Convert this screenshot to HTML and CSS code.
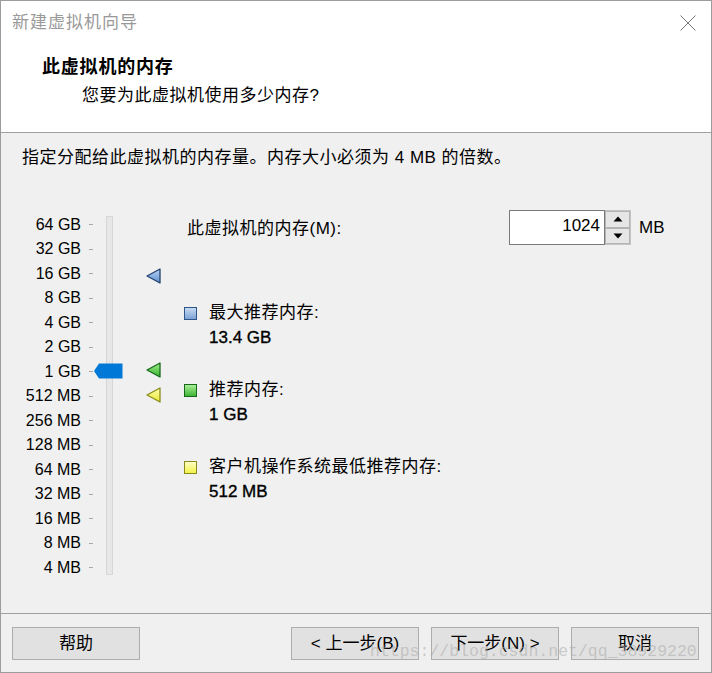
FILE: index.html
```html
<!DOCTYPE html>
<html lang="zh-CN">
<head>
<meta charset="utf-8">
<title>新建虚拟机向导</title>
<link rel="stylesheet" href="styles.css">
</head>
<body>
<div class="window">
  <div class="top">
    <div class="titlebar">
      <span class="title">新建虚拟机向导</span>
      <svg class="close" width="16" height="16" viewBox="0 0 16 16"><path d="M0.5 0.5 L15.5 15.5 M15.5 0.5 L0.5 15.5" stroke="#7a7a7a" stroke-width="1" fill="none"/></svg>
    </div>
    <div class="header">
      <div class="h1">此虚拟机的内存</div>
      <div class="sub">您要为此虚拟机使用多少内存?</div>
    </div>
  </div>

  <div class="content">
    <div class="intro">指定分配给此虚拟机的内存量。内存大小必须为 4 MB 的倍数。</div>
    <div class="main">
      <div class="scale">
        <div class="labels">
          <div>64 GB</div><div>32 GB</div><div>16 GB</div><div>8 GB</div><div>4 GB</div>
          <div>2 GB</div><div>1 GB</div><div>512 MB</div><div>256 MB</div><div>128 MB</div>
          <div>64 MB</div><div>32 MB</div><div>16 MB</div><div>8 MB</div><div>4 MB</div>
        </div>
        <div class="ticks">
          <i></i><i></i><i></i><i></i><i></i><i></i><i></i><i></i><i></i><i></i><i></i><i></i><i></i><i></i><i></i>
        </div>
        <div class="track"></div>
        <svg class="thumb" width="29" height="16" viewBox="0 0 29 16"><polygon points="0,8 5,0.5 28.5,0.5 28.5,15.5 5,15.5" fill="#0078d7"/></svg>
        <svg class="marker m-blue" width="15" height="16" viewBox="0 0 15 16">
          <defs><linearGradient id="gb" x1="0" y1="0" x2="0" y2="1"><stop offset="0" stop-color="#b9d1f0"/><stop offset="1" stop-color="#5d8fd0"/></linearGradient></defs>
          <polygon points="1,8 14,1 14,15" fill="url(#gb)" stroke="#22426e" stroke-width="1.3" stroke-linejoin="round"/>
        </svg>
        <svg class="marker m-green" width="15" height="16" viewBox="0 0 15 16">
          <defs><linearGradient id="gg" x1="0" y1="0" x2="0" y2="1"><stop offset="0" stop-color="#a4ec8e"/><stop offset="1" stop-color="#32b42a"/></linearGradient></defs>
          <polygon points="1,8 14,1 14,15" fill="url(#gg)" stroke="#17691a" stroke-width="1.3" stroke-linejoin="round"/>
        </svg>
        <svg class="marker m-yellow" width="15" height="16" viewBox="0 0 15 16">
          <defs><linearGradient id="gy" x1="0" y1="0" x2="0" y2="1"><stop offset="0" stop-color="#ffffb0"/><stop offset="1" stop-color="#e8e830"/></linearGradient></defs>
          <polygon points="1,8 14,1 14,15" fill="url(#gy)" stroke="#8a8a1c" stroke-width="1.3" stroke-linejoin="round"/>
        </svg>
      </div>

      <div class="panel">
        <div class="memrow">
          <span class="memlabel">此虚拟机的内存(M):</span>
          <div class="spin">
            <div class="spinval">1024</div>
            <div class="spinbtns">
              <div class="sb"><svg width="10" height="6" viewBox="0 0 10 6"><polygon points="5,0.5 9.5,5.5 0.5,5.5" fill="#000"/></svg></div>
              <div class="sb"><svg width="10" height="6" viewBox="0 0 10 6"><polygon points="0.5,0.5 9.5,0.5 5,5.5" fill="#000"/></svg></div>
            </div>
          </div>
          <span class="unit">MB</span>
        </div>

        <div class="legend">
          <div class="item">
            <span class="sq sq-blue"></span>
            <div class="itext"><div class="ilabel">最大推荐内存:</div><div class="ival">13.4 GB</div></div>
          </div>
          <div class="item">
            <span class="sq sq-green"></span>
            <div class="itext"><div class="ilabel">推荐内存:</div><div class="ival">1 GB</div></div>
          </div>
          <div class="item">
            <span class="sq sq-yellow"></span>
            <div class="itext"><div class="ilabel">客户机操作系统最低推荐内存:</div><div class="ival">512 MB</div></div>
          </div>
        </div>
      </div>
    </div>
  </div>

  <div class="footer">
    <button class="btn">帮助</button>
    <div class="navbtns">
      <button class="btn">&lt; 上一步(B)</button>
      <button class="btn">下一步(N) &gt;</button>
      <button class="btn">取消</button>
    </div>
  </div>

  <div class="watermark">https://blog.csdn.net/qq_38929220</div>
</div>
</body>
</html>
```

FILE: styles.css
```css
* { box-sizing: border-box; }
html, body { margin: 0; padding: 0; background: #f0f0f0; }
body {
  font-family: "Liberation Sans", "Noto Sans CJK SC", sans-serif;
  font-size: 17px;
  color: #000;
}
.window {
  position: relative;
  width: 712px;
  height: 673px;
  border: 1px solid #9c9c9c;
  display: flex;
  flex-direction: column;
  background: #f0f0f0;
  overflow: hidden;
}
.top {
  height: 132px;
  background: #fff;
  border-bottom: 1px solid #a0a0a0;
  flex: none;
}
.titlebar {
  height: 43px;
  display: flex;
  align-items: center;
  justify-content: space-between;
  padding: 0 15px 0 11px;
}
.title {
  font-size: 17px;
  letter-spacing: 1px;
  color: #999;
  line-height: 22px;
}
.close { display: block; margin-top: 1px; }
.header { padding-left: 41px; }
.h1 {
  margin-top: 12px;
  font-size: 18px;
  font-weight: bold;
  letter-spacing: 0.8px;
  line-height: 22px;
}
.sub {
  margin-top: 7px;
  padding-left: 40px;
  font-size: 17px;
  letter-spacing: 0.5px;
  line-height: 22px;
}
.content {
  flex: 1;
  display: flex;
  flex-direction: column;
}
.intro {
  padding: 14px 0 0 21px;
  line-height: 22px;
  letter-spacing: 0.5px;
}
.main {
  margin-top: 42px;
  display: flex;
}
.scale {
  position: relative;
  width: 183px;
  display: flex;
  flex: none;
}
.labels {
  width: 80px;
  margin-top: 1.5px;
  text-align: right;
  font-size: 16px;
}
.labels div { height: 24.5px; line-height: 24.5px; }
.ticks {
  margin-left: 8px;
  margin-top: 1.5px;
  width: 4px;
  display: flex;
  flex-direction: column;
}
.ticks i {
  height: 24.5px;
  display: flex;
  align-items: center;
}
.ticks i::before {
  content: "";
  display: block;
  width: 4px;
  height: 1px;
  background: #a8a8a8;
}
.track {
  margin-left: 13px;
  margin-top: 5px;
  width: 7px;
  height: 359px;
  background: #e7e7e7;
  border: 1px solid #d6d6d6;
}
.thumb { position: absolute; left: 93px; top: 152px; }
.marker { position: absolute; left: 145px; }
.m-blue { top: 57px; }
.m-green { top: 151px; }
.m-yellow { top: 176px; }

.panel {
  display: flex;
  flex-direction: column;
}
.memrow {
  margin-top: -1px;
  height: 35px;
  display: flex;
  align-items: center;
}
.memlabel {
  width: 325px;
  padding-left: 3px;
  padding-bottom: 2px;
  letter-spacing: 0.5px;
}
.spin {
  display: flex;
  height: 35px;
  border: 1px solid #c4c4c4;
}
.spinval {
  width: 96px;
  background: #fff;
  border: 1px solid #7a7a7a;
  margin: -1px 0 -1px -1px;
  text-align: right;
  padding-right: 4px;
  line-height: 29px;
  font-size: 17px;
}
.spinbtns {
  width: 25px;
  display: flex;
  flex-direction: column;
}
.sb {
  flex: 1;
  background: #e6e6e6;
  border: 1px solid #b4b4b4;
  display: flex;
  align-items: center;
  justify-content: center;
}
.sb svg { display: block; }
.unit { margin-left: 8px; font-size: 17px; }

.legend {
  margin-top: 57px;
  display: flex;
  flex-direction: column;
  gap: 29px;
}
.item { display: flex; }
.sq {
  width: 13px;
  height: 13px;
  margin-top: 5px;
  margin-right: 12px;
  border: 1px solid;
  flex: none;
}
.sq-blue { border-color: #2f5487; background: linear-gradient(#c7daf3, #7ea2d6); }
.sq-green { border-color: #17691a; background: linear-gradient(#a9ee96, #3fb536); }
.sq-yellow { border-color: #8a8a1c; background: linear-gradient(#ffffc4, #f2f24a); }
.ilabel { line-height: 22px; letter-spacing: 0.5px; }
.ival {
  padding-top: 2px;
  line-height: 24px;
  font-size: 17px;
  -webkit-text-stroke: 0.35px #000;
}

.footer {
  height: 59px;
  flex: none;
  border-top: 1px solid #a0a0a0;
  padding: 13px 12px 0 11px;
  display: flex;
  align-items: flex-start;
}
.navbtns {
  margin-left: auto;
  display: flex;
  gap: 12px;
}
.btn {
  width: 128px;
  height: 33px;
  background: #e1e1e1;
  border: 1px solid #adadad;
  font-family: "Liberation Sans", "Noto Sans CJK SC", sans-serif;
  font-size: 17px;
  color: #000;
  padding: 0;
  line-height: 29px;
}
.watermark {
  position: absolute;
  left: 369px;
  top: 641px;
  font-family: "Liberation Mono", monospace;
  font-size: 16.5px;
  color: rgba(170, 170, 170, 0.55);
  white-space: nowrap;
  pointer-events: none;
}
```
